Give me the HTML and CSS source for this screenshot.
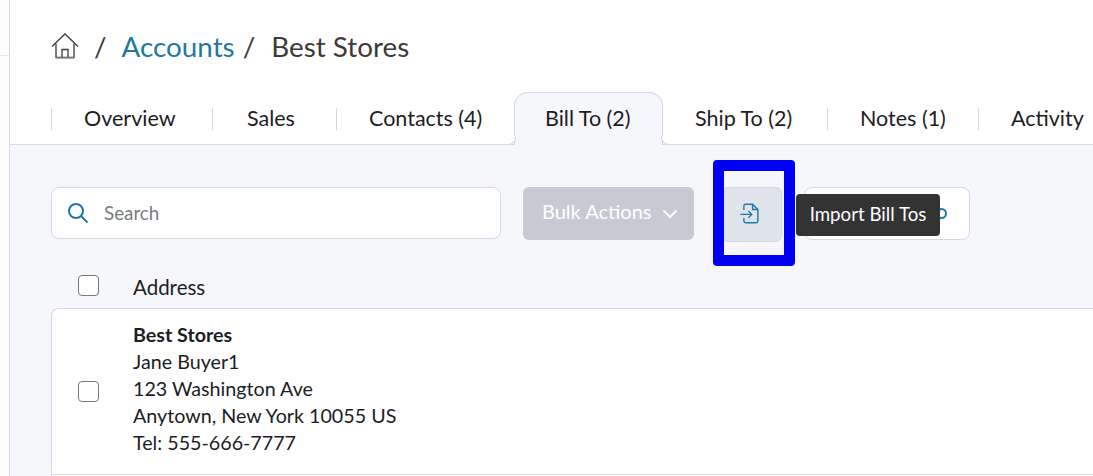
FILE: index.html
```html
<!DOCTYPE html>
<html lang="en">
<head>
<meta charset="UTF-8">
<meta name="viewport" content="width=device-width, initial-scale=1.0">
<title>Best Stores - Bill To</title>
<link rel="stylesheet" href="styles.css">
</head>
<body>
  <div class="side"><div class="side-line"></div></div>
  <div class="main">
    <div class="head">
      <div class="crumbs">
        <svg class="home" width="28" height="26" viewBox="0 0 28 26" fill="none" stroke="#3d3a38" stroke-width="1.3">
          <path d="M1 13.500 14 1l13 12.500"/>
          <path d="M5 10.500V24.500H23V10.500"/>
          <path d="M11 24.500V16.500H17V24.500"/>
          <path d="M5 25H23" stroke="#9a9a9a"/>
        </svg>
        <span class="sep first">/</span>
        <a class="crumb-link">Accounts</a>
        <span class="sep">/</span>
        <span class="crumb-now">Best Stores</span>
      </div>
      <div class="tabs">
        <div class="tab tab-overview">Overview</div>
        <div class="tab tab-sales">Sales</div>
        <div class="tab tab-contacts">Contacts (4)</div>
        <div class="tab tab-active">Bill To (2)</div>
        <div class="tab tab-ship">Ship To (2)</div>
        <div class="tab tab-notes">Notes (1)</div>
        <div class="tab tab-activity">Activity</div>
      </div>
    </div>

    <div class="content">
      <div class="toolbar">
        <div class="search">
          <svg width="22" height="22" viewBox="0 0 22 22" fill="none" stroke="#1f78a4" stroke-width="2">
            <circle cx="9" cy="9" r="7"/>
            <path d="M14 14l6.500 6.500"/>
          </svg>
          <span>Search</span>
        </div>
        <div class="bulk">
          Bulk Actions
          <svg width="16" height="10" viewBox="0 0 16 10" fill="none" stroke="#fff" stroke-width="2"><path d="M1.500 1.500 8 8l6.500-6.500"/></svg>
        </div>
        <div class="import">
          <svg width="20" height="21" viewBox="0 0 22 24" fill="none" stroke="#1f78a4" stroke-width="1.600">
            <path d="M4 8V3.500Q4 1.500 6 1.500H14L20 7.500V20.500Q20 22.500 18 22.500H6Q4 22.500 4 20.500V17"/>
            <path d="M14 1.500V7.500H20"/>
            <path d="M0 13H13M9 9l4 4-4 4"/>
          </svg>
        </div>
        <div class="filter-box"><span class="filter-dot"></span></div>
      </div>

      <div class="list-head">
        <span class="check"></span>
        <span class="col-title">Address</span>
      </div>

      <div class="card">
        <span class="check"></span>
        <div class="address">
          <div class="name">Best Stores</div>
          <div>Jane Buyer1</div>
          <div>123 Washington Ave</div>
          <div>Anytown, New York 10055 US</div>
          <div>Tel: 555-666-7777</div>
        </div>
      </div>
      <div class="card-next"></div>
    </div>
  </div>

  <div class="highlight"></div>
  <div class="tooltip">Import Bill Tos</div>
</body>
</html>
```

FILE: styles.css
```css
* {
  box-sizing: border-box;
}
html, body {
  height: 100%;
}
body {
  margin: 0;
  display: flex;
  overflow: hidden;
  font-family: Lato, "Open Sans", sans-serif;
  color: #1d1d1f;
  background-color: #fff;
}
.side {
  width: 10px;
  flex-shrink: 0;
  background-color: #fdfdfe;
  border-right: 1px solid #d3d7e6;
}
.side-line {
  height: 56px;
  border-bottom: 1px solid #e4e6ee;
}
.main {
  flex: 1;
  min-width: 0;
}
.head {
  height: 145px;
  padding: 29px 0 0 41px;
  background-color: #fff;
  border-bottom: 1px solid #d3d7e6;
}
.crumbs {
  display: flex;
  align-items: center;
  height: 34px;
  font-size: 27.800px;
  color: #3d3a38;
}
.home {
  flex-shrink: 0;
  margin-right: 15px;
}
.sep {
  margin-right: 13px;
}
.sep.first {
  margin-right: 15px;
}
.crumb-link {
  color: #1f78a4;
  margin-right: 8px;
}
.crumb-now {
  margin-left: 3px;
}
.tabs {
  display: flex;
  align-items: center;
  margin-top: 29px;
  height: 53px;
  font-size: 21.500px;
  white-space: nowrap;
}
.tab {
  flex-shrink: 0;
  height: 22px;
  line-height: 21px;
  padding: 0 0 0 32px;
  border-left: 1px solid #d3d7e6;
}
.tab-overview {
  width: 161px;
}
.tab-sales {
  width: 124px;
  padding-left: 34px;
}
.tab-contacts {
  width: 178px;
  padding-left: 32px;
}
.tab.tab-active {
  position: relative;
  height: 53px;
  line-height: 51px;
  width: 149px;
  padding-left: 30px;
  background-color: #f6f7fa;
  border: 1px solid #d3d7e6;
  border-bottom: none;
  border-radius: 14px 14px 0 0;
}
.tab-active::before,
.tab-active::after {
  content: "";
  position: absolute;
  bottom: 0;
  width: 8px;
  height: 8px;
  background-color: #fff;
  border: 0 solid #d3d7e6;
  border-bottom-width: 1px;
}
.tab-active::before {
  left: -8px;
  border-right-width: 1px;
  border-radius: 0 0 8px 0;
}
.tab-active::after {
  right: -8px;
  border-left-width: 1px;
  border-radius: 0 0 0 8px;
}
.tab-ship {
  width: 164px;
  border-left: none;
  padding-left: 32px;
}
.tab-notes {
  width: 151px;
  padding-left: 32px;
}
.tab-activity {
  padding-left: 32px;
}
.content {
  height: 331px;
  padding: 42px 0 0 41px;
  background-color: #f6f7fa;
  overflow: hidden;
}
.toolbar {
  display: flex;
  align-items: flex-start;
}
.search {
  display: flex;
  align-items: center;
  gap: 15px;
  width: 450px;
  height: 52px;
  padding: 0 0 2px 15px;
  font-size: 18.800px;
  color: #787c80;
  background-color: #fff;
  border: 1px solid #d3d7e6;
  border-radius: 8px;
}
.search svg {
  margin-top: 2px;
}
.bulk {
  display: flex;
  align-items: center;
  gap: 10px;
  width: 171px;
  height: 53px;
  margin-left: 22px;
  padding: 0 0 5px 19px;
  font-size: 20px;
  color: #fff;
  background-color: #c7cad2;
  border-radius: 6px;
}
.bulk svg {
  margin-top: 6px;
}
.import {
  display: flex;
  align-items: center;
  justify-content: center;
  width: 60px;
  height: 55px;
  margin-left: 28px;
  padding: 0 5px 2px 0;
  background-color: #dee4ea;
  border: 1px solid #d3d7e6;
  border-radius: 6px;
}
.filter-box {
  display: flex;
  align-items: center;
  justify-content: flex-end;
  width: 166px;
  height: 53px;
  margin-left: 22px;
  padding-right: 22px;
  background-color: #fff;
  border: 1px solid #d3d7e6;
  border-radius: 8px;
}
.filter-dot {
  width: 11px;
  height: 11px;
  border: 2px solid #1f78a4;
  border-radius: 50%;
}
.list-head {
  display: flex;
  align-items: center;
  gap: 34px;
  height: 66px;
  padding: 21px 0 0 27px;
  font-size: 20.500px;
}
.col-title {
  margin-top: 3px;
}
.check {
  flex-shrink: 0;
  width: 21px;
  height: 21px;
  background-color: #fff;
  border: 1.500px solid #76777a;
  border-radius: 4px;
}
.card {
  display: flex;
  align-items: center;
  gap: 34px;
  height: 167px;
  padding-left: 26px;
  font-size: 19.700px;
  line-height: 27px;
  background-color: #fff;
  border: 1px solid #d3d7e6;
  border-right: none;
  border-radius: 8px 0 0 0;
}
.address {
  margin-bottom: 6px;
}
.name {
  font-weight: 700;
}
.card-next {
  height: 40px;
  background-color: #fff;
  border-left: 1px solid #d3d7e6;
}
.highlight {
  position: absolute;
  left: 713px;
  top: 160px;
  width: 82px;
  height: 106px;
  border: 11px solid #0000f5;
  border-radius: 4px;
}
.tooltip {
  position: absolute;
  left: 796px;
  top: 194px;
  width: 144px;
  height: 42px;
  line-height: 41px;
  text-align: center;
  font-size: 18.700px;
  color: #fff;
  background-color: #333;
  border-radius: 4px;
}
```
